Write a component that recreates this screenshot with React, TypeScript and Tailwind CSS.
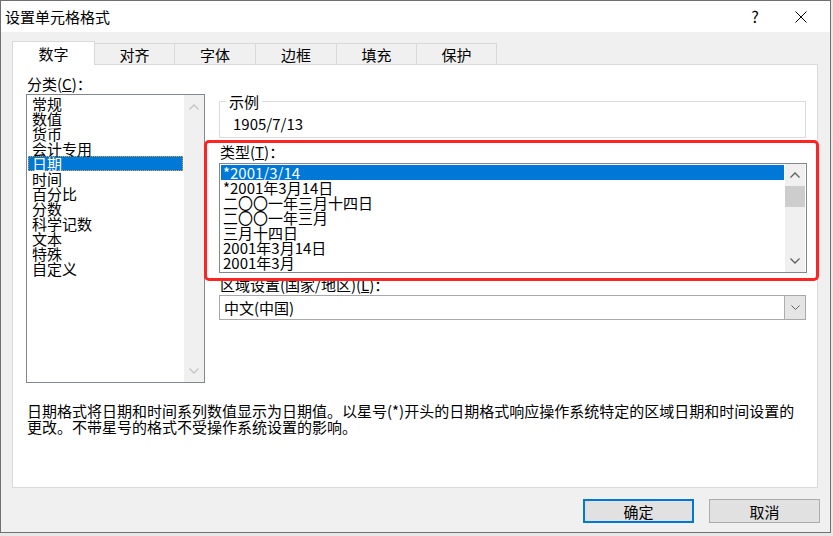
import React from "react";

const categories = ["常规", "数值", "货币", "会计专用", "日期", "时间", "百分比", "分数", "科学记数", "文本", "特殊", "自定义"];
const types = ["*2001/3/14", "*2001年3月14日", "二〇〇一年三月十四日", "二〇〇一年三月", "三月十四日", "2001年3月14日", "2001年3月"];
const tabs = ["对齐", "字体", "边框", "填充", "保护"];
const tabWidths = ["w-[80px]", "w-[81px]", "w-[81px]", "w-[80px]", "w-[80px]"];

function Chevron({ dir, color }: { dir: "up" | "down"; color: string }) {
  return (
    <svg width="10" height="6" viewBox="0 0 10 6" fill="none" stroke={color} strokeWidth="1.3">
      {dir === "up" ? <polyline points="0.5,5.5 5,1 9.5,5.5" /> : <polyline points="0.5,0.5 5,5 9.5,0.5" />}
    </svg>
  );
}

export default function App() {
  return (
    <div className="w-[833px] h-[536px] bg-[#e8e8e8] font-['Noto_Sans_CJK_SC','Noto_Sans',sans-serif] text-[15px] leading-[15px] text-black overflow-hidden">
      <div className="w-[831px] h-[533px] border border-[#707070] bg-[#f0f0f0] flex flex-col">
        {/* title bar */}
        <div className="h-[31px] bg-white flex items-center shrink-0">
          <div className="pl-[4px]">设置单元格格式</div>
          <div className="ml-auto flex items-center pr-[6px]">
            <div className="w-[46px] text-center text-[16px]">?</div>
            <div className="w-[46px] flex justify-center">
              <svg width="12" height="12" viewBox="0 0 12 12" stroke="#000" strokeWidth="1">
                <line x1="0.5" y1="0.5" x2="11.5" y2="11.5" />
                <line x1="11.5" y1="0.5" x2="0.5" y2="11.5" />
              </svg>
            </div>
          </div>
        </div>

        {/* tabs */}
        <div className="flex items-end pl-[11px] pt-[9px]">
          <div className="relative z-10 w-[83px] h-[24px] bg-white border-l border-t border-r border-[#d9d9d9] flex items-center justify-center">
            数字
          </div>
          {tabs.map((t, i) => (
            <div
              key={t}
              className={`${tabWidths[i]} h-[22px] border-t border-r border-[#d9d9d9] flex items-center justify-center`}
            >
              {t}
            </div>
          ))}
        </div>

        {/* panel */}
        <div className="relative -mt-px ml-[11px] w-[806px] h-[424px] bg-white border border-[#d9d9d9] pt-[11px] pl-[13px]">
          <div className="flex gap-[14px]">
            {/* left column */}
            <div className="w-[179px] flex flex-col">
              <div className="pl-px">分类(<span className="underline">C</span>)：</div>
              <div className="mt-[3px] h-[289px] border border-[#828790] flex">
                <div className="flex-1 pt-px px-px">
                  {categories.map((c) =>
                    c === "日期" ? (
                      <div key={c} className="h-[15px] bg-[#0078d7] text-white border border-dotted border-[#f0a030] pl-[3px] leading-[13px]">
                        {c}
                      </div>
                    ) : (
                      <div key={c} className="h-[15px] pl-[4px]">
                        {c}
                      </div>
                    )
                  )}
                </div>
                <div className="w-[20px] bg-[#f0f0f0] flex flex-col items-center justify-between pt-[9px] pb-[8px]">
                  <Chevron dir="up" color="#c4c4c4" />
                  <Chevron dir="down" color="#c4c4c4" />
                </div>
              </div>
            </div>

            {/* right column */}
            <div className="w-[588px] flex flex-col pt-[18px]">
              <fieldset className="h-[44px] w-[587px] border border-[#dcdcdc]">
                <legend className="ml-[6px] px-[3px] leading-[15px]">示例</legend>
                <div className="mt-[7px] pl-[13px]">1905/7/13</div>
              </fieldset>

              <div className="mt-[6px] pl-px">类型(<span className="underline">T</span>)：</div>
              <div className="mt-[4px] h-[110px] border border-[#828790] flex">
                <div className="flex-1 pt-px px-px">
                  {types.map((t, i) => (
                    <div key={t} className={`h-[15px] pl-[2px] ${i === 0 ? "bg-[#0078d7] text-white" : ""}`}>
                      {t}
                    </div>
                  ))}
                </div>
                <div className="w-[20px] mr-px bg-[#f0f0f0] flex flex-col items-center">
                  <div className="h-[22px] flex items-center justify-center">
                    <Chevron dir="up" color="#606060" />
                  </div>
                  <div className="w-full h-[21px] bg-[#cdcdcd]" />
                  <div className="flex-1" />
                  <div className="h-[22px] flex items-center justify-center">
                    <Chevron dir="down" color="#606060" />
                  </div>
                </div>
              </div>

              <div className="mt-[4px] pl-px">区域设置(国家/地区)(<span className="underline">L</span>)：</div>
              <div className="mt-[3px] h-[25px] w-[587px] border border-[#a9a9a9] flex">
                <div className="flex-1 flex items-center pl-[4px]">中文(中国)</div>
                <div className="w-[21px] bg-[#e5e5e5] border-l border-[#adadad] flex items-center justify-center">
                  <svg width="9" height="5" viewBox="0 0 9 5" fill="none" stroke="#606060" strokeWidth="1">
                    <polyline points="0.5,0.5 4.5,4.5 8.5,0.5" />
                  </svg>
                </div>
              </div>
            </div>
          </div>

          <div className="mt-[20px] pl-px leading-[16px] whitespace-nowrap">
            日期格式将日期和时间系列数值显示为日期值。以星号(*)开头的日期格式响应操作系统特定的区域日期和时间设置的
            <br />
            更改。不带星号的格式不受操作系统设置的影响。
          </div>

          {/* annotation box */}
          <div className="absolute left-[191px] top-[75px] w-[615px] h-[141px] border-[3px] border-[#ff2424] rounded-[5px] pointer-events-none" />
        </div>

        {/* buttons */}
        <div className="flex justify-end gap-[15px] pr-[10px] mt-[11px]">
          <button className="w-[111px] h-[24px] bg-[#e1e1e1] border-2 border-[#0078d7] flex items-center justify-center">
            确定
          </button>
          <button className="w-[111px] h-[24px] bg-[#e1e1e1] border border-[#adadad] flex items-center justify-center">
            取消
          </button>
        </div>
      </div>
    </div>
  );
}
